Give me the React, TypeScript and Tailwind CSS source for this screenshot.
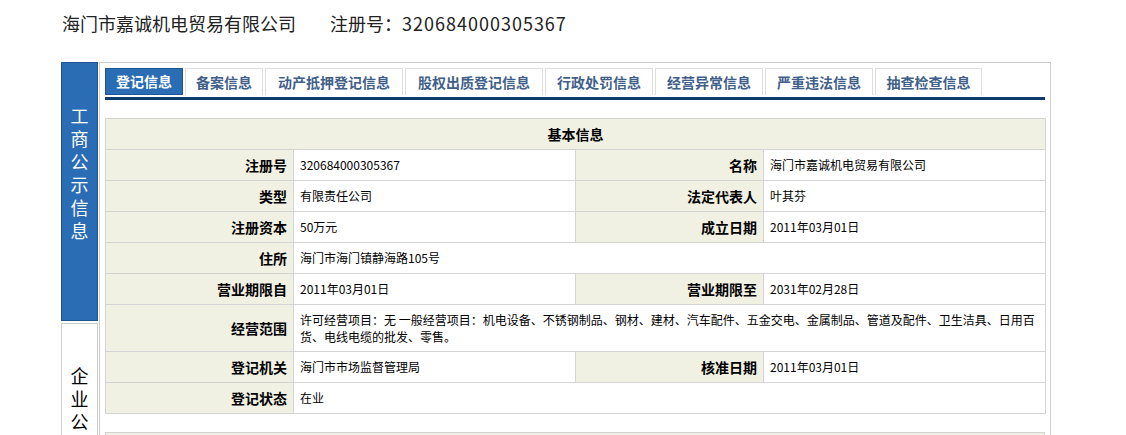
import React from 'react';

const tabs = [
  { label: '登记信息', w: 'w-[78px]', active: true },
  { label: '备案信息', w: 'w-[78px]' },
  { label: '动产抵押登记信息', w: 'w-[138px]' },
  { label: '股权出质登记信息', w: 'w-[138px]' },
  { label: '行政处罚信息', w: 'w-[108px]' },
  { label: '经营异常信息', w: 'w-[108px]' },
  { label: '严重违法信息', w: 'w-[108px]' },
  { label: '抽查检查信息', w: 'w-[107px]' },
];

const labelCls = 'bg-[#f1f1e3] border border-[#d4d4d4] text-right pr-[6px] text-[14px] font-bold text-black';
const valueCls = 'border border-[#d4d4d4] pl-[6px] text-[12px] text-black';

// one char per line, sidebar tab style
function VerticalText({ text }: { text: string }) {
  return <div className="mx-auto w-[18px] text-[18px] leading-[23px] break-all">{text}</div>;
}

export default function App() {
  return (
    <div className="min-h-screen bg-white pl-[61px] font-['Noto_Sans_CJK_SC',sans-serif]">
      {/* Title */}
      <div className="h-[46px] flex items-center pl-[1px] text-[18px] text-[#222]">
        <span>海门市嘉诚机电贸易有限公司</span>
        <span className="ml-[34px]">
          注册号：<span className="tracking-[1px]">320684000305367</span>
        </span>
      </div>

      <div className="mt-[16px] flex items-start">
        {/* Side tabs */}
        <div className="w-[37px] flex flex-col gap-[2px]">
          <div className="h-[259px] bg-[#2a6db5] border border-[#1d5594] pt-[41px] text-white">
            <VerticalText text="工商公示信息" />
          </div>
          <div className="h-[200px] bg-white border border-[#cccccc] pt-[40px] text-black">
            <VerticalText text="企业公示信息" />
          </div>
        </div>

        {/* Main panel */}
        <div className="ml-[1px] w-[952px] h-[420px] border border-[#cccccc] border-b-0 pt-[5px] px-[5px]">
          <div className="h-[27px] flex gap-[2px]">
            {tabs.map((t) =>
              t.active ? (
                <div
                  key={t.label}
                  className={`${t.w} flex items-center justify-center bg-[#2a6db5] border border-[#1d5594] text-[14px] font-bold text-white`}
                >
                  {t.label}
                </div>
              ) : (
                <div
                  key={t.label}
                  className={`${t.w} flex items-center justify-center bg-white border border-b-0 border-[#dddddd] text-[14px] font-bold text-[#40608a]`}
                >
                  {t.label}
                </div>
              )
            )}
          </div>
          <div className="mt-[2px] h-[3px] bg-[#0d3b6e]" />

          <table className="mt-[18px] w-[940px] table-fixed border-collapse">
            <colgroup>
              <col className="w-[188px]" />
              <col className="w-[282px]" />
              <col className="w-[188px]" />
              <col className="w-[282px]" />
            </colgroup>
            <tbody>
              <tr className="h-[31px]">
                <th colSpan={4} className="bg-[#f1f1e3] border border-[#d4d4d4] text-[14px] font-bold text-black text-center">
                  基本信息
                </th>
              </tr>
              <tr className="h-[31px]">
                <td className={labelCls}>注册号</td>
                <td className={valueCls}>320684000305367</td>
                <td className={labelCls}>名称</td>
                <td className={valueCls}>海门市嘉诚机电贸易有限公司</td>
              </tr>
              <tr className="h-[31px]">
                <td className={labelCls}>类型</td>
                <td className={valueCls}>有限责任公司</td>
                <td className={labelCls}>法定代表人</td>
                <td className={valueCls}>叶其芬</td>
              </tr>
              <tr className="h-[31px]">
                <td className={labelCls}>注册资本</td>
                <td className={valueCls}>50万元</td>
                <td className={labelCls}>成立日期</td>
                <td className={valueCls}>2011年03月01日</td>
              </tr>
              <tr className="h-[31px]">
                <td className={labelCls}>住所</td>
                <td className={valueCls} colSpan={3}>海门市海门镇静海路105号</td>
              </tr>
              <tr className="h-[31px]">
                <td className={labelCls}>营业期限自</td>
                <td className={valueCls}>2011年03月01日</td>
                <td className={labelCls}>营业期限至</td>
                <td className={valueCls}>2031年02月28日</td>
              </tr>
              <tr className="h-[47px]">
                <td className={labelCls}>经营范围</td>
                <td className={`${valueCls} leading-[17px] pr-[6px]`} colSpan={3}>
                  许可经营项目：无 一般经营项目：机电设备、不锈钢制品、钢材、建材、汽车配件、五金交电、金属制品、管道及配件、卫生洁具、日用百货、电线电缆的批发、零售。
                </td>
              </tr>
              <tr className="h-[31px]">
                <td className={labelCls}>登记机关</td>
                <td className={valueCls}>海门市市场监督管理局</td>
                <td className={labelCls}>核准日期</td>
                <td className={valueCls}>2011年03月01日</td>
              </tr>
              <tr className="h-[31px]">
                <td className={labelCls}>登记状态</td>
                <td className={valueCls} colSpan={3}>在业</td>
              </tr>
            </tbody>
          </table>

          <table className="mt-[18px] w-[940px] table-fixed border-collapse">
            <tbody>
              <tr className="h-[31px]">
                <th className="bg-[#f1f1e3] border border-[#d4d4d4] text-[14px] font-bold text-black text-center">
                  股东信息
                </th>
              </tr>
            </tbody>
          </table>
        </div>
      </div>
    </div>
  );
}
